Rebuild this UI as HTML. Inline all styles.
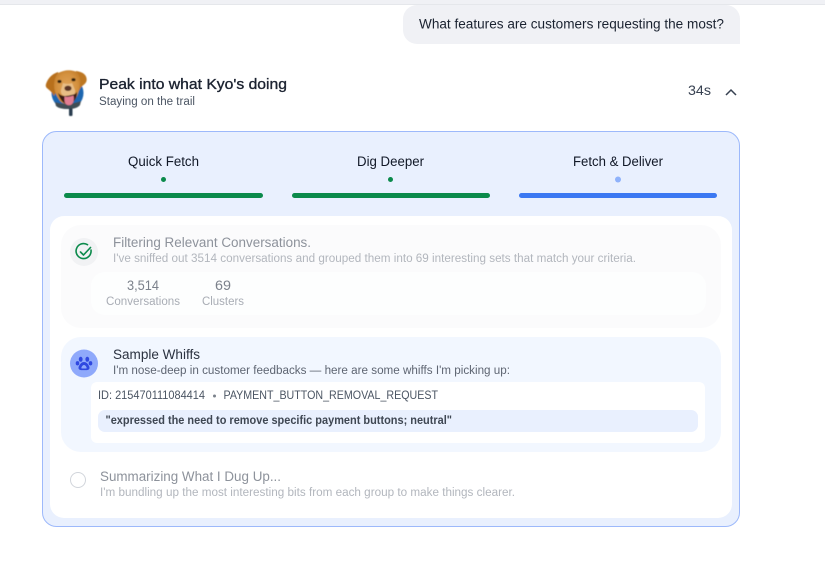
<!DOCTYPE html>
<html><head><meta charset="utf-8">
<style>
html,body{margin:0;padding:0;background:#fff;width:825px;height:566px;overflow:hidden}
svg{display:block}
text{font-family:"Liberation Sans",sans-serif;white-space:pre}
</style></head><body>
<svg width="825" height="566" viewBox="0 0 825 566" xmlns="http://www.w3.org/2000/svg">
<defs>
<radialGradient id="fur" cx="0.5" cy="0.5" r="0.6"><stop offset="0" stop-color="#e0a45a"/><stop offset="0.65" stop-color="#d4913f"/><stop offset="1" stop-color="#c17c28"/></radialGradient>
<filter id="soft" x="-10%" y="-10%" width="120%" height="120%"><feGaussianBlur stdDeviation="0.45"/></filter>
</defs>
<rect width="825" height="566" fill="#fff"/>
<rect x="0" y="0" width="825" height="4" fill="#f0f1f5"/>
<rect x="0" y="4" width="825" height="1" fill="#e5e7eb"/>

<path d="M417 5H726a14 14 0 0 1 14 14V44H417a14 14 0 0 1-14-14V19a14 14 0 0 1 14-14z" fill="#f0f1f5"/>
<text x="419" y="28.500" font-size="13.500" fill="#1a2230" textLength="305" lengthAdjust="spacingAndGlyphs">What features are customers requesting the most?</text>

<!-- dog -->
<g filter="url(#soft)">
<circle cx="67.500" cy="93" r="16" fill="#1f66b0"/>
<path d="M55 102q12 4 26-1l-1 4q-3 4-12 4q-9 0-12-3z" fill="#3f4e55"/>
<rect x="69" y="108" width="3.500" height="8" rx="1" fill="#2c3e50"/>
<path d="M58 72q-9 3-12 12q-1 3 2 5q4 3 6 7q4-7 5-14z" fill="#b8701f"/>
<path d="M76 71q9 1 10.500 7q1 4-3 7q-3 2-4.500 6q-3-8-4-14z" fill="#bd7724"/>
<path d="M58 73q10-5 19-1q4 5 3 12q-1 9-4 14q-3 6-9 6q-6 0-9-6q-4-6-4-13q0-7 4-12z" fill="url(#fur)"/>
<path d="M63 83q5 2 9 0l3 7q1 6-7 7q-8-1-7-7z" fill="#e8bd85"/>
<ellipse cx="59.500" cy="81.500" rx="2.100" ry="1.600" fill="#33200f"/>
<ellipse cx="73.500" cy="79.700" rx="2.100" ry="1.600" fill="#33200f"/>
<ellipse cx="68" cy="88.300" rx="3.600" ry="2.700" fill="#5c3526"/>
<path d="M58 93q3 3 7 3q3 0 10-2q1-1 2-2q0 6-3 9q-3 3-7 3q-6-1-9-11z" fill="#3a1c14"/>
<path d="M64.500 96.500q4 1 9-1q1 5-1 8q-2 2.500-5 1.500q-3-1-3-5z" fill="#e27d92"/>
</g>

<text x="99" y="89" font-size="15" fill="#1b2230" textLength="188" lengthAdjust="spacingAndGlyphs" stroke="#1b2230" stroke-width=".35">Peak into what Kyo's doing</text>
<text x="99" y="105" font-size="11.500" fill="#4b5563" textLength="96" lengthAdjust="spacingAndGlyphs">Staying on the trail</text>
<text x="688" y="95" font-size="13.500" fill="#374151" textLength="23" lengthAdjust="spacingAndGlyphs">34s</text>
<path d="M726 95l5-5l5 5" fill="none" stroke="#374151" stroke-width="1.500"/>

<!-- card -->
<rect x="42.500" y="131.500" width="697" height="395" rx="14" fill="#e9f0fe" stroke="#9db9fb"/>
<text x="128" y="166" font-size="13.500" fill="#111827" textLength="71" lengthAdjust="spacingAndGlyphs">Quick Fetch</text>
<text x="357" y="166" font-size="13.500" fill="#111827" textLength="67" lengthAdjust="spacingAndGlyphs">Dig Deeper</text>
<text x="573" y="166" font-size="13.500" fill="#111827" textLength="90" lengthAdjust="spacingAndGlyphs">Fetch &amp; Deliver</text>
<circle cx="163.500" cy="179.500" r="2.500" fill="#0b8a4b"/>
<circle cx="390.500" cy="179.500" r="2.500" fill="#0b8a4b"/>
<circle cx="618" cy="179.500" r="3" fill="#8fb2fb"/>
<rect x="64" y="193" width="199" height="5" rx="2.500" fill="#0b8a4b"/>
<rect x="292" y="193" width="198" height="5" rx="2.500" fill="#0b8a4b"/>
<rect x="519" y="193" width="198" height="5" rx="2.500" fill="#3b78f2"/>

<rect x="50" y="216" width="682" height="302" rx="14" fill="#fff"/>

<!-- section 1 -->
<rect x="61" y="225" width="660" height="103" rx="20" fill="#fbfbfc"/>
<rect x="91" y="272" width="615" height="43" rx="14" fill="#fdfefe"/>
<circle cx="84" cy="252" r="14" fill="#f1f2f4"/>
<path d="M91 250a7.500 7.500 0 1 1-3.500-5.300" fill="none" stroke="#0b8a4b" stroke-width="1.600" stroke-linecap="round"/>
<path d="M80.500 252l3 3l7-7.500" fill="none" stroke="#0b8a4b" stroke-width="1.600" stroke-linecap="round" stroke-linejoin="round"/>
<text x="113" y="247" font-size="13.500" fill="#8d929b" textLength="198" lengthAdjust="spacingAndGlyphs">Filtering Relevant Conversations.</text>
<text x="113" y="262" font-size="11.500" fill="#b2b6bd" textLength="523" lengthAdjust="spacingAndGlyphs">I've sniffed out 3514 conversations and grouped them into 69 interesting sets that match your criteria.</text>
<text x="127" y="290" font-size="13.500" fill="#7b818b" textLength="32" lengthAdjust="spacingAndGlyphs">3,514</text>
<text x="215" y="290" font-size="13.500" fill="#7b818b" textLength="16" lengthAdjust="spacingAndGlyphs">69</text>
<text x="106" y="305" font-size="11.500" fill="#a9adb5" textLength="74" lengthAdjust="spacingAndGlyphs">Conversations</text>
<text x="202" y="305" font-size="11.500" fill="#a9adb5" textLength="42" lengthAdjust="spacingAndGlyphs">Clusters</text>

<!-- section 2 -->
<rect x="61" y="337" width="660" height="115" rx="20" fill="#f2f7ff"/>
<circle cx="84" cy="363.500" r="14" fill="#8fa9fb"/>
<g fill="#2f48e0">
<ellipse cx="80.700" cy="359.300" rx="1.900" ry="2.500"/>
<ellipse cx="87.300" cy="359.300" rx="1.900" ry="2.500"/>
<ellipse cx="77.500" cy="363.300" rx="1.800" ry="2.200"/>
<ellipse cx="90.500" cy="363.300" rx="1.800" ry="2.200"/>
<path fill-rule="evenodd" d="M84 362q3.200 0 5.300 4.500q1 3.300-2.300 3.600h-6q-3.300-.3-2.300-3.600q2.100-4.500 5.300-4.500zM84 365q-1.500 0-2.600 2.500q-.3 1 .8 1h3.600q1.100 0 .8-1q-1.100-2.500-2.600-2.500z"/>
</g>
<text x="113" y="359" font-size="13.500" fill="#2b3240" textLength="87" lengthAdjust="spacingAndGlyphs">Sample Whiffs</text>
<text x="113" y="374" font-size="11.500" fill="#5e6572" textLength="397" lengthAdjust="spacingAndGlyphs">I'm nose-deep in customer feedbacks — here are some whiffs I'm picking up:</text>
<rect x="91" y="382" width="614" height="61" rx="6" fill="#fff"/>
<text x="98" y="399" font-size="11.500" fill="#4b5563" textLength="107" lengthAdjust="spacingAndGlyphs">ID: 215470111084414</text>
<circle cx="214.500" cy="396" r="1.500" fill="#7b818b"/>
<text x="223.500" y="399" font-size="11.500" fill="#4b5563" textLength="214.500" lengthAdjust="spacingAndGlyphs">PAYMENT_BUTTON_REMOVAL_REQUEST</text>
<rect x="98" y="410" width="600" height="22" rx="7" fill="#e9f0fe"/>
<text x="105.500" y="424" font-size="11.500" font-weight="bold" fill="#3f4753" textLength="346.500" lengthAdjust="spacingAndGlyphs">"expressed the need to remove specific payment buttons; neutral"</text>

<!-- section 3 -->
<circle cx="78" cy="480" r="7.500" fill="#fff" stroke="#d1d5db"/>
<text x="100" y="481" font-size="13.500" fill="#8d929b" textLength="181" lengthAdjust="spacingAndGlyphs">Summarizing What I Dug Up...</text>
<text x="100" y="496" font-size="11.500" fill="#b2b6bd" textLength="415" lengthAdjust="spacingAndGlyphs">I'm bundling up the most interesting bits from each group to make things clearer.</text>
</svg>
</body></html>
